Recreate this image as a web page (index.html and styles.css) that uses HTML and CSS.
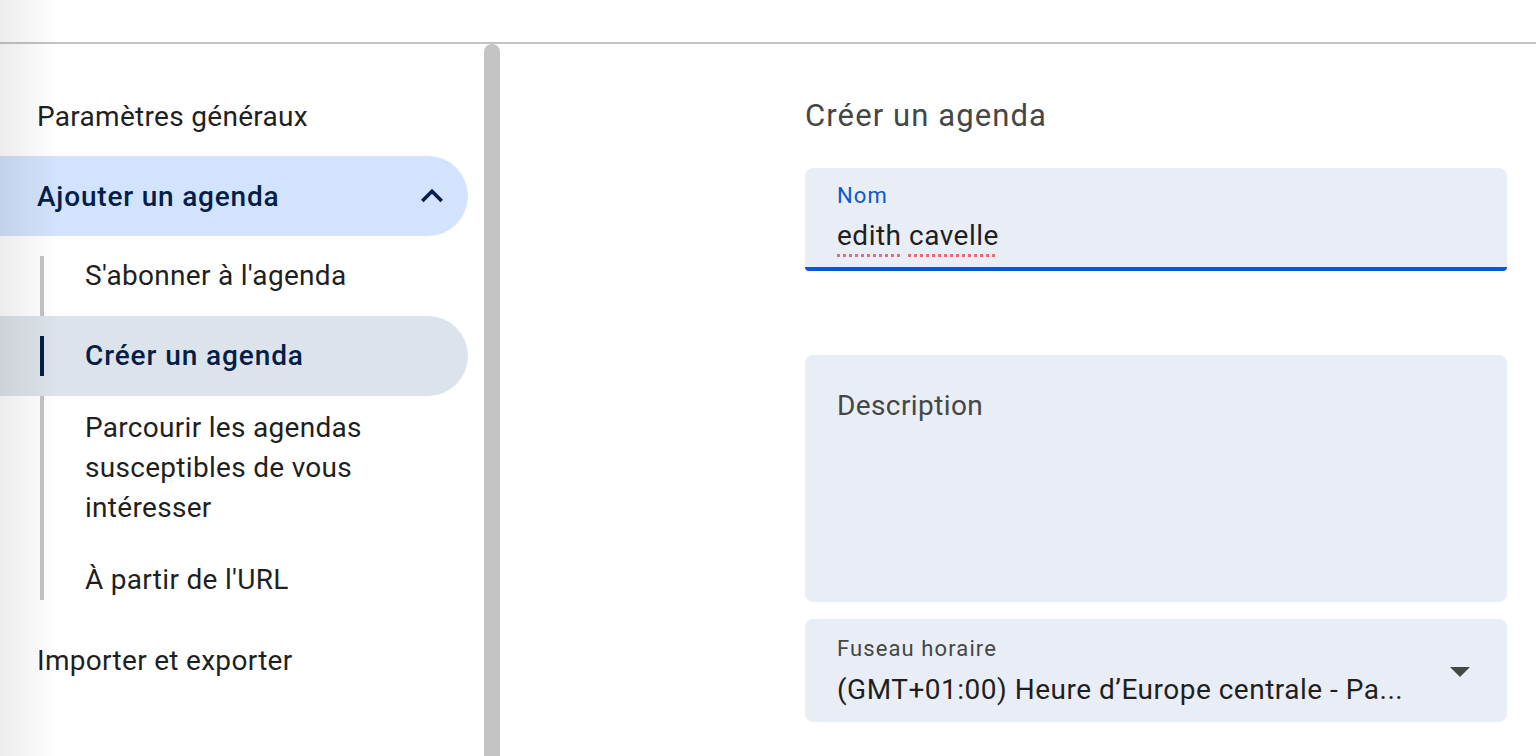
FILE: index.html
```html
<!DOCTYPE html>
<html lang="fr">
<head>
<meta charset="utf-8">
<title>Créer un agenda</title>
<link rel="stylesheet" href="styles.css">
</head>
<body>
<div class="page">
  <header class="topbar"></header>
  <div class="layout">
    <nav class="sidebar">
      <div class="nav-item">Paramètres généraux</div>
      <div class="nav-item nav-item--open">
        <span>Ajouter un agenda</span>
        <svg class="chevron" viewBox="0 0 24 24" width="44" height="44" aria-hidden="true"><path d="M12 8l-6 6 1.41 1.41L12 10.83l4.59 4.58L18 14z"/></svg>
      </div>
      <div class="sub-list">
        <div class="sub-item">S'abonner à l'agenda</div>
        <div class="sub-item sub-item--active">Créer un agenda</div>
        <div class="sub-item sub-item--multi"><span class="wrap">Parcourir les agendas susceptibles de vous intéresser</span></div>
        <div class="sub-item">À partir de l'URL</div>
      </div>
      <div class="nav-item">Importer et exporter</div>
    </nav>
    <div class="scrollbar"></div>
    <main class="content">
      <h1 class="title">Créer un agenda</h1>
      <div class="field field--focused">
        <div class="field-label field-label--blue">Nom</div>
        <div class="field-value"><span class="misspelled">edith</span> <span class="misspelled">cavelle</span></div>
      </div>
      <div class="field field--area">
        <div class="area-label">Description</div>
      </div>
      <div class="field field--select">
        <div class="select-text">
          <div class="field-label">Fuseau horaire</div>
          <div class="field-value">(GMT+01:00) Heure d’Europe centrale - Pa...</div>
        </div>
        <span class="triangle"></span>
      </div>
    </main>
  </div>
</div>
</body>
</html>
```
FILE: styles.css
```css
* { box-sizing: border-box; }
html, body { margin: 0; padding: 0; }
body {
  width: 1536px;
  height: 756px;
  overflow: hidden;
  background: #fff;
  font-family: Roboto, "Liberation Sans", sans-serif;
  color: #1f1f1f;
  position: relative;
}
body::before {
  content: "";
  position: absolute;
  left: 0; top: 0; bottom: 0;
  width: 60px;
  background: linear-gradient(to right, rgba(0,0,0,0.075), rgba(0,0,0,0));
  pointer-events: none;
  z-index: 10;
}
.page { display: flex; flex-direction: column; height: 756px; }
.topbar {
  height: 44px;
  flex: none;
  border-bottom: 2px solid #c4c4c4;
}
.layout { display: flex; flex: 1; min-height: 0; }

.sidebar {
  width: 484px;
  flex: none;
  padding: 32px 16px 0 0;
  display: flex;
  flex-direction: column;
  font-size: 28px;
  letter-spacing: 0.3px;
}
.nav-item {
  height: 80px;
  display: flex;
  align-items: center;
  justify-content: space-between;
  padding: 0 14px 0 37px;
  border-radius: 0 40px 40px 0;
}
.nav-item--open {
  background: #d3e3fd;
  color: #041e49;
  font-weight: 500;
  letter-spacing: 0.8px;
}
.chevron { fill: #041e49; flex: none; }

.sub-list { position: relative; display: flex; flex-direction: column; }
.sub-list::before {
  content: "";
  position: absolute;
  left: 40px; top: 20px; bottom: 20px;
  width: 4px;
  background: #c4c4c4;
}
.sub-item {
  position: relative;
  min-height: 80px;
  padding: 12px 16px 12px 85px;
  display: flex;
  align-items: center;
  line-height: 40px;
  border-radius: 0 40px 40px 0;
}
.sub-item--active {
  background: #dde3ea;
  color: #041e49;
  font-weight: 500;
  letter-spacing: 0.9px;
}
.sub-item--active::before {
  content: "";
  position: absolute;
  left: 40px; top: 20px;
  width: 4px; height: 40px;
  background: #041e49;
  z-index: 1;
}
.wrap { max-width: 320px; }

.scrollbar {
  width: 16px;
  flex: none;
  background: #c4c4c4;
  border-radius: 8px 8px 0 0;
}

.content {
  flex: 1;
  padding: 52px 29px 0 305px;
  display: flex;
  flex-direction: column;
}
.title {
  margin: 0;
  font-size: 31px;
  font-weight: 400;
  letter-spacing: 1.1px;
  line-height: 40px;
  color: #444746;
}
.field {
  background: #e9edf6;
  border-radius: 8px;
  padding: 0 32px;
}
.field--focused {
  margin-top: 32px;
  padding: 14px 32px 11px;
  border-bottom: 4px solid #0b57d0;
  border-radius: 8px 8px 4px 4px;
}
.field-label {
  font-size: 22px;
  letter-spacing: 1.1px;
  line-height: 28px;
  color: #444746;
}
.field-label--blue { color: #0b57d0; }
.field-value {
  margin-top: 6px;
  font-size: 28px;
  letter-spacing: 0.5px;
  line-height: 40px;
  color: #1f1f1f;
  white-space: nowrap;
}
.misspelled {
  text-decoration: underline dotted #f06a6a;
  text-decoration-thickness: 3px;
  text-underline-offset: 9px;
}
.field--area {
  margin-top: 84px;
  height: 247px;
  padding-top: 31px;
}
.area-label {
  font-size: 28px;
  letter-spacing: 0.4px;
  line-height: 40px;
  color: #444746;
}
.field--select {
  margin-top: 17px;
  height: 103px;
  padding: 16px 37px 12px 32px;
  display: flex;
  align-items: center;
  justify-content: space-between;
}
.field--select .field-value { margin-top: 7px; }
.triangle {
  width: 0; height: 0;
  border-left: 10px solid transparent;
  border-right: 10px solid transparent;
  border-top: 10px solid #444746;
  margin-top: -2px;
}
```
